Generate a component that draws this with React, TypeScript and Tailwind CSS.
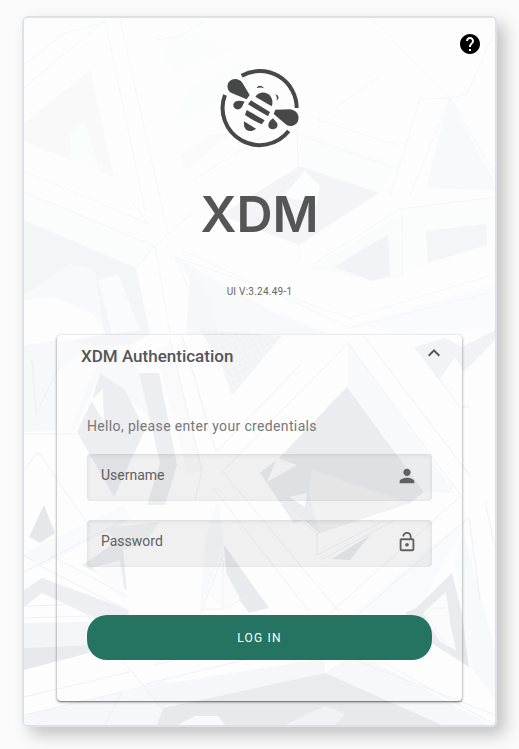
import { useState } from "react";
import { MdExpandLess, MdExpandMore, MdHelp, MdLockOpen, MdPerson } from "react-icons/md";

const SHAPES = [
  // upper half
  { points: "24,123 90,70 114,177 24,142", fill: "#f9f9fa" },
  { points: "70,135 84,120 100,172 72,160", fill: "#fbfcfc" },
  { points: "157,44 200,32 230,50 175,75", fill: "#fbfcfc" },
  { points: "188,90 240,62 262,78 182,126 174,122", fill: "#fbfcfc" },
  { points: "180,155 210,135 232,132 186,170", fill: "#fafafb" },
  { points: "24,192 154,246 136,268 24,220", fill: "#fbfcfc" },
  { points: "24,220 136,268 150,334 130,345 24,350", fill: "#f4f5f7" },
  { points: "24,295 70,264 95,270 104,330 24,345", fill: "#f8f9fa" },
  { points: "24,301 52,297 94,314 106,334 24,350", fill: "#fdfdfe" },
  { points: "98,280 118,274 140,330 112,334", fill: "#fafbfc" },
  { points: "175,257 270,310 330,334 218,334 208,305", fill: "#f8f9fb" },
  { points: "190,272 206,288 218,334 186,334", fill: "#f6f7f9" },
  { points: "297,128 400,165 379,193 300,166", fill: "#fbfcfc" },
  { points: "300,166 379,193 299,245 220,215", fill: "#f4f4f6" },
  { points: "283,196 305,171 320,186 317,205", fill: "#fcfdfd" },
  { points: "449,98 495,183 495,190 426,188", fill: "#f8f9fa" },
  { points: "400,209 495,197 495,245 427,263 404,272", fill: "#fbfcfc" },
  { points: "312,268 399,215 400,278 372,281", fill: "#fafbfb" },
  { points: "334,267 388,234 390,276 372,281", fill: "#f2f3f6" },
  { points: "426,231 486,224 487,245 428,263", fill: "#f4f5f7" },
  { points: "350,326 495,284 495,325 440,338", fill: "#fafbfc" },
  // lower half
  { points: "24,345 60,340 125,350 140,373 152,420 100,373 75,430 24,432", fill: "#f7f8fa" },
  { points: "57,370 82,352 96,365 68,436 57,432", fill: "#fcfcfd" },
  { points: "100,373 125,390 145,430 114,497 77,432 92,400", fill: "#ebecef" },
  { points: "91,400 103,389 104,422", fill: "#fdfdfe" },
  { points: "155,350 170,345 203,470 188,474", fill: "#f9f9fa" },
  { points: "139,373 159,373 177,465 165,505 147,505 160,463", fill: "#ebecf0" },
  { points: "200,330 282,336 232,395 222,367", fill: "#f1f2f4" },
  { points: "348,343 348,387 424,492 455,493", fill: "#f7f8f9" },
  { points: "347,387 424,492 410,503 319,533 304,520 294,523 260,473 279,458", fill: "#e9eaed" },
  { points: "312,470 352,484 410,503 319,533 309,493", fill: "#f0f1f2" },
  { points: "277,458 297,465 267,482", fill: "#fcfcfc" },
  { points: "289,497 307,493 305,507", fill: "#fcfcfc" },
  { points: "370,535 350,560 332,559", fill: "#e7e8eb" },
  { points: "415,347 445,338 462,347 495,330 495,340 464,372 455,357 439,380", fill: "#f1f2f4" },
  { points: "44,505 55,533 40,543 29,537", fill: "#e5e7eb" },
  { points: "24,555 40,545 125,505 130,520 42,566", fill: "#f8f9fa" },
  { points: "104,528 159,522 148,540 125,550", fill: "#f2f3f5" },
  { points: "82,565 122,538 127,590", fill: "#eaecef" },
  { points: "92,568 120,560 126,605", fill: "#fafbfc" },
  { points: "218,500 224,545 200,612 205,540", fill: "#f7f8f9" },
  { points: "224,545 269,608 249,613 227,583", fill: "#e6e8ec" },
  { points: "208,592 220,562 240,598 222,609", fill: "#fafbfc" },
  { points: "24,590 42,578 129,610 127,623 99,620 42,593 24,607", fill: "#ebedf0" },
  { points: "24,623 89,622 89,645 24,648", fill: "#f3f4f7" },
  { points: "24,648 89,645 89,653 24,670", fill: "#e7e9ed" },
  { points: "24,716 165,680 162,709 157,725 24,725", fill: "#f6f7f9" },
  { points: "139,688 325,658 325,673 163,708", fill: "#f5f6f8" },
  { points: "163,708 325,673 394,702 442,725 157,725", fill: "#e7e9ec" },
  { points: "178,725 195,716 218,716 225,725", fill: "#f8f9fb" },
  { points: "285,725 325,706 345,714 335,725", fill: "#f0f2f4" },
  { points: "345,660 372,660 490,725 442,725 325,673", fill: "#f5f7f9" },
  { points: "469,517 416,613 355,613 415,560", fill: "#f8f9fa" },
  { points: "452,573 462,613 469,667 422,637 405,613 415,609", fill: "#e7e9ec" },
  { points: "423,613 446,592 450,622 456,650 440,642", fill: "#fafbfc" },
  { points: "455,560 463,530 495,650 495,700 471,667", fill: "#f7f9fa" },
];

const BRIGHT_SEAMS = [
  "M24 65 64 33 105 22M24 88 105 20 145 210M120 20 168 233",
  "M24 171 149 224 130 200M24 192 155 246 192 213M136 268 155 246 170 334M157 40 181 36 205 20",
  "M193 180 290 120M297 128 298 166M297 134 393 167M318 120 400 146M318 120 380 76",
  "M175 257 350 318 495 274M175 257 208 334M182 250 350 328 495 291",
  "M400 209 495 197M400 209 312 265M402 213V275M299 245V262M390 196 420 99",
  "M373 20 450 98 467 94 495 30M450 98 495 175M450 98 420 99M450 98 410 195M24 295 80 262",
];

const DARK_SEAMS = [
  "M24 434H76M32 360 36 414 60 365M38 452 92 530M38 452 24 470",
  "M216 452 300 365M216 452 182 335M223 471 348 343 461 496 330 613M202 471 170 340",
  "M363 335 471 477M214 489 310 613M222 471 340 613M202 471 195 500",
  "M469 517 360 613M469 517 480 600M485 501 495 548M415 347 460 407H469",
  "M24 555 42 567 127 610M24 572 125 520M50 555 128 597M24 606 90 604M24 618 90 616",
  "M24 697 130 672M24 715 122 692 105 725M122 660 163 709 157 725M146 684 325 640M154 665 210 652",
  "M201 612 223 555M202 609H224L248 596M223 560V609M317 533V555L380 523M321 560 395 520",
  "M355 660 495 715M372 656 495 725M424 608H446M424 610 452 657M285 506 318 535",
];

function Backdrop() {
  return (
    <svg
      aria-hidden="true"
      className="absolute inset-0 h-full w-full"
      viewBox="24 18 471 707"
      preserveAspectRatio="xMidYMid slice"
    >
      <defs>
        <pattern id="mesh" width="6" height="6" patternUnits="userSpaceOnUse" patternTransform="rotate(-28)">
          <path d="M0 0V6M0 0H6" stroke="#f9f9fa" />
        </pattern>
      </defs>
      <rect x="24" y="18" width="471" height="707" fill="#fdfdfe" />
      {SHAPES.map((s) => (
        <polygon key={s.points} points={s.points} fill={s.fill} />
      ))}
      <polygon points="200,330 282,336 232,395 222,367" fill="url(#mesh)" />
      {BRIGHT_SEAMS.map((d) => (
        <path key={d} d={d} fill="none" stroke="#f5f6f7" />
      ))}
      {DARK_SEAMS.map((d) => (
        <path key={d} d={d} fill="none" stroke="#eeeff1" />
      ))}
    </svg>
  );
}

function BeeLogo() {
  return (
    <svg role="img" aria-label="XDM" className="h-20 w-20" viewBox="58 54 240 240" fill="#484848">
      <g fill="none" stroke="#484848" strokeWidth="12">
        <path d="M123 77A111 111 0 0 1 288 174" />
        <path d="M264 243A111 111 0 0 1 73 135" />
      </g>
      <path d="M147 135 125 98C114 82 91 84 83 98 76 113 84 127 98 131L138 148Z" />
      <path d="M224 179 268 178C286 180 296 194 293 209 289 225 273 232 258 225L219 192Z" />
      <path d="M132 155C118 150 101 151 98 163 97 174 107 181 117 177 124 174 126 164 132 155Z" />
      <path d="M217 205C206 212 201 222 204 231 209 240 223 240 229 231 235 220 223 213 217 205Z" />
      <path d="M164 140C176 123 199 125 209 138 216 148 217 158 213 169Z" />
      <path d="M151 151 208 186 202 199 142 163Z" />
      <path d="M138 180 192 211 183 223C167 217 149 205 133 195Z" />
      <path d="M130 214 166 236C158 243 146 245 139 241 130 235 129 224 130 214Z" />
      <path d="M168 114C172 105 184 105 190 115 182 111 175 112 168 114Z" />
      <path d="M223 133C235 135 237 146 228 152 230 144 228 138 223 133Z" />
    </svg>
  );
}

interface FieldProps {
  type: string;
  label: string;
  icon: React.ReactNode;
}

function Field({ type, label, icon }: FieldProps) {
  const [value, setValue] = useState("");

  return (
    <div className="flex h-[47px] items-center rounded bg-black/5 pr-3.5 pb-1 shadow-[inset_0_1px_4px_rgba(0,0,0,0.1)]">
      <input
        type={type}
        aria-label={label}
        placeholder={label}
        value={value}
        onChange={(e) => setValue(e.target.value)}
        className="h-full min-w-0 flex-1 bg-transparent px-3.5 pb-0.5 text-sm text-[#555] placeholder-[#606060] outline-none"
      />
      {icon}
    </div>
  );
}

export default function App() {
  const [open, setOpen] = useState(true);

  return (
    <div className="flex min-h-screen flex-col bg-[#fafafa] px-[22px] pt-4 pb-[22px] font-['Roboto',sans-serif]">
      <main className="relative flex-1 overflow-hidden rounded-md border-2 border-[#dee2e6] shadow-[8px_8px_16px_rgba(0,0,0,0.22)]">
        <Backdrop />
        <div className="relative flex flex-col px-[33px] pb-6">
          {/* Help */}
          <div className="-mr-5 flex justify-end pt-3.5">
            <button type="button" aria-label="Help" className="text-black">
              <MdHelp size={24} />
            </button>
          </div>

          {/* Brand */}
          <div className="flex flex-col items-center pt-3">
            <BeeLogo />
            <h1 className="mt-9 font-['Inter',sans-serif] text-[50px] leading-[60px] font-semibold text-[#555]">
              XDM
            </h1>
            <p className="mt-10 text-[10px] leading-4 tracking-wide text-[#666]">UI V:3.24.49-1</p>
          </div>

          {/* Login panel */}
          <section className="mt-[35px] rounded-sm bg-white/10 shadow-[0_1px_3px_rgba(0,0,0,0.45),0_1px_1px_rgba(0,0,0,0.25)]">
            <div className="flex items-start justify-between px-4 pt-1.5 pl-6">
              <h2 className="pt-[3px] text-[17px] leading-6 font-medium text-[#555]">XDM Authentication</h2>
              <button
                type="button"
                aria-label="Toggle XDM Authentication"
                aria-expanded={open}
                onClick={() => setOpen(!open)}
                className="text-[#555]"
              >
                {open ? <MdExpandLess size={24} /> : <MdExpandMore size={24} />}
              </button>
            </div>
            {open && (
              <form className="px-[30px] pt-12 pb-[41px]" onSubmit={(e) => e.preventDefault()}>
                <p className="text-sm leading-5 tracking-wide text-[#777]">
                  Hello, please enter your credentials
                </p>
                <div className="mt-[18px] flex flex-col gap-[19px]">
                  <Field type="text" label="Username" icon={<MdPerson size={22} className="text-[#606060]" />} />
                  <Field type="password" label="Password" icon={<MdLockOpen size={22} className="text-[#606060]" />} />
                </div>
                <button
                  type="submit"
                  className="mt-12 h-[45px] w-full rounded-[20px] bg-[#247461] text-xs tracking-widest text-white"
                >
                  LOG IN
                </button>
              </form>
            )}
          </section>
        </div>
      </main>
    </div>
  );
}
